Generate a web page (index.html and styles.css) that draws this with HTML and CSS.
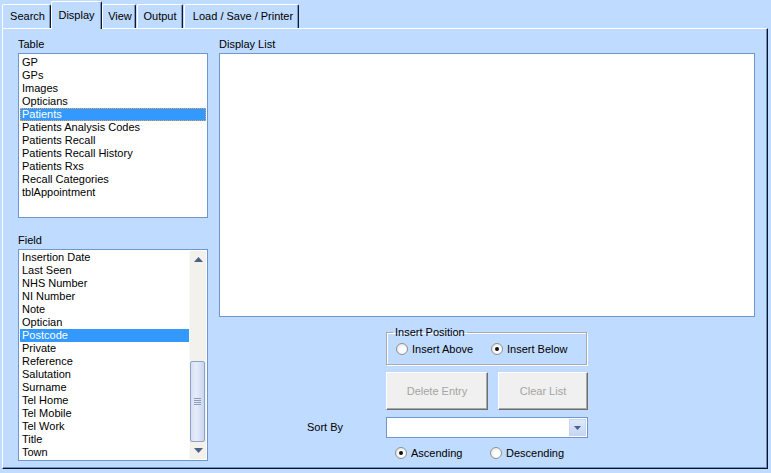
FILE: index.html
```html
<!DOCTYPE html>
<html>
<head>
<meta charset="utf-8">
<link rel="stylesheet" href="styles.css">
</head>
<body>
<div class="app">
  <div class="tabs">
    <div class="tab t-search">Search</div>
    <div class="tab t-display sel">Display</div>
    <div class="tab t-view">View</div>
    <div class="tab t-output">Output</div>
    <div class="tab t-load">Load / Save / Printer</div>
  </div>
  <div class="panel">
    <div class="col-left">
      <div class="label">Table</div>
      <div class="listbox table-list">
        <div class="item">GP</div>
        <div class="item">GPs</div>
        <div class="item">Images</div>
        <div class="item">Opticians</div>
        <div class="item selected focus">Patients</div>
        <div class="item">Patients Analysis Codes</div>
        <div class="item">Patients Recall</div>
        <div class="item">Patients Recall History</div>
        <div class="item">Patients Rxs</div>
        <div class="item">Recall Categories</div>
        <div class="item">tblAppointment</div>
      </div>
      <div class="label field-label">Field</div>
      <div class="listbox field-list">
        <div class="items">
          <div class="item">Insertion Date</div>
          <div class="item">Last Seen</div>
          <div class="item">NHS Number</div>
          <div class="item">NI Number</div>
          <div class="item">Note</div>
          <div class="item">Optician</div>
          <div class="item selected">Postcode</div>
          <div class="item">Private</div>
          <div class="item">Reference</div>
          <div class="item">Salutation</div>
          <div class="item">Surname</div>
          <div class="item">Tel Home</div>
          <div class="item">Tel Mobile</div>
          <div class="item">Tel Work</div>
          <div class="item">Title</div>
          <div class="item">Town</div>
        </div>
        <div class="vscroll">
          <div class="sb-btn"><svg width="9" height="5" viewBox="0 0 9 5"><path d="M4.5 0 L9 5 L0 5 Z" fill="#4D6185"/></svg></div>
          <div class="sb-track">
            <div class="sb-thumb"><span class="grip"></span></div>
          </div>
          <div class="sb-btn"><svg width="9" height="5" viewBox="0 0 9 5"><path d="M0 0 L9 0 L4.5 5 Z" fill="#4D6185"/></svg></div>
        </div>
      </div>
    </div>
    <div class="col-right">
      <div class="label">Display List</div>
      <div class="display-box"></div>
      <div class="controls">
        <fieldset class="group">
          <legend>Insert Position</legend>
          <div class="radio-row">
            <label class="radio"><span class="dot"></span>Insert Above</label>
            <label class="radio"><span class="dot on"></span>Insert Below</label>
          </div>
        </fieldset>
        <div class="buttons">
          <div class="btn btn-delete">Delete Entry</div>
          <div class="btn btn-clear">Clear List</div>
        </div>
        <div class="sort-label">Sort By</div>
        <div class="combo">
          <div class="combo-text"></div>
          <div class="combo-btn"><svg width="7" height="4" viewBox="0 0 7 4"><path d="M0 0 L7 0 L3.5 4 Z" fill="#4D6185"/></svg></div>
        </div>
        <div class="radio-row order">
          <label class="radio"><span class="dot on"></span>Ascending</label>
          <label class="radio"><span class="dot"></span>Descending</label>
        </div>
      </div>
    </div>
  </div>
</div>
</body>
</html>
```
FILE: styles.css
```css
* { box-sizing: border-box; }
html, body {
  margin: 0;
  padding: 0;
  width: 771px;
  height: 473px;
  overflow: hidden;
  background: #BFDBFF;
  font-family: "Liberation Sans", Arial, sans-serif;
  font-size: 11px;
  color: #000;
}
.app { width: 771px; height: 473px; }

.tabs {
  display: flex;
  align-items: flex-end;
  height: 28px;
  padding-left: 2px;
}
.tab {
  height: 24px;
  padding-top: 5px;
  line-height: 13px;
  text-align: center;
  white-space: nowrap;
  border-left: 1px solid #fff;
  border-top: 1px solid #fff;
  border-right: 1px solid #0E1A33;
  border-top-left-radius: 2px;
  border-top-right-radius: 2px;
  box-shadow: inset -1px 0 0 #7F98C2;
  background: #BFDBFF;
}
.tab.sel {
  height: 28px;
  padding-top: 7px;
  margin-bottom: -1px;
  position: relative;
  z-index: 2;
}
.t-search { width: 49px; padding-left: 2px; }
.t-display { width: 51px; }
.t-view { width: 34px; padding-left: 2px; }
.t-output { width: 46px; margin-left: 1px; }
.t-load { width: 115px; margin-left: 1px; padding-left: 3px; }

.panel {
  margin-left: 2px;
  width: 766px;
  height: 441px;
  border-left: 1px solid #fff;
  border-top: 1px solid #fff;
  border-right: 1px solid #0A1428;
  border-bottom: 1px solid #0A1428;
  box-shadow: inset -1px -1px 0 #6F8EC2;
  padding: 9px 0 0 15px;
  display: flex;
  gap: 11px;
}

.label {
  line-height: 13px;
  height: 13px;
  margin-bottom: 2px;
  white-space: nowrap;
}
.col-left { width: 190px; display: flex; flex-direction: column; }
.col-right { width: 536px; display: flex; flex-direction: column; }

.listbox {
  background: #fff;
  border: 1px solid #7096D2;
  padding: 1px;
}
.table-list { height: 165px; padding-top: 2px; }
.field-label { margin-top: 16px; }
.field-list { height: 212px; display: flex; }
.field-list .items { width: 169px; }

.item {
  height: 13px;
  line-height: 13px;
  padding-left: 2px;
  white-space: nowrap;
}
.item.selected { background: #3399FF; color: #fff; }
.item.focus { outline: 1px dotted #E8A060; outline-offset: -1px; }

.vscroll {
  width: 17px;
  display: flex;
  flex-direction: column;
  background: #F2F1EC;
  border-left: 1px solid #FAFAF8;
}
.sb-btn {
  height: 17px;
  display: flex;
  align-items: center;
  justify-content: center;
}
.sb-track {
  flex: 1;
  display: flex;
  flex-direction: column;
  justify-content: flex-end;
}
.sb-thumb {
  height: 81px;
  margin: 0 1px 0 0;
  border: 1px solid #8FA2C6;
  border-radius: 2px;
  background: linear-gradient(to right, #D6E0F4, #E6EDFA 40%, #C9D6EF);
  display: flex;
  align-items: center;
  justify-content: center;
}
.grip {
  width: 7px;
  height: 7px;
  background: repeating-linear-gradient(to bottom, #8D9CB8 0, #8D9CB8 1px, transparent 1px, transparent 2px);
}

.display-box {
  height: 264px;
  background: #fff;
  border: 1px solid #7096D2;
}

.controls {
  display: grid;
  grid-template-columns: 167px 202px;
  margin-top: 9px;
}
.group, .buttons, .combo, .order { grid-column: 2; }
.group {
  margin: 0;
  padding: 0 0 5px 9px;
  border: 1px solid #A7ABB0;
  box-shadow: inset 1px 1px 0 #fff, 1px 1px 0 #fff;
  min-width: 0;
  width: 201px;
}
.group legend {
  padding: 0 2px;
  margin-left: -3px;
  line-height: 13px;
  height: 13px;
}
.radio-row {
  display: flex;
  align-items: center;
  height: 20px;
}
.radio {
  display: flex;
  align-items: center;
  width: 95px;
  white-space: nowrap;
  line-height: 13px;
}
.dot {
  width: 12px;
  height: 12px;
  border-radius: 50%;
  border: 1px solid #8E9194;
  background: radial-gradient(circle at 60% 60%, #fff 30%, #E6E6E0 80%, #D2D2CC);
  margin-right: 4px;
  position: relative;
  flex: none;
}
.dot.on::after {
  content: "";
  position: absolute;
  left: 3px;
  top: 3px;
  width: 4px;
  height: 4px;
  border-radius: 50%;
  background: #111;
}

.buttons {
  display: flex;
  gap: 10px;
  margin-top: 7px;
}
.btn {
  height: 38px;
  display: flex;
  align-items: center;
  justify-content: center;
  background: #F0F0F0;
  color: #A4A4A4;
  border-top: 1px solid #fff;
  border-left: 1px solid #fff;
  border-right: 1px solid #6E6E6E;
  border-bottom: 1px solid #6E6E6E;
  box-shadow: inset -1px -1px 0 #A8A8A8;
}
.btn-delete { width: 102px; }
.btn-clear { width: 90px; }

.sort-label {
  grid-column: 1;
  grid-row: 3;
  padding-left: 88px;
  margin-top: 7px;
  height: 21px;
  line-height: 21px;
}
.combo {
  grid-row: 3;
  margin-top: 7px;
  height: 21px;
  border: 1px solid #7096D2;
  background: #fff;
  display: flex;
  justify-content: flex-end;
  padding: 1px;
}
.combo-btn {
  width: 17px;
  background: linear-gradient(to bottom, #DDE8FA, #C6D6F2);
  border: 1px solid #C9D6EE;
  display: flex;
  align-items: center;
  justify-content: center;
}
.order {
  margin-top: 5px;
  padding-left: 9px;
}
```
